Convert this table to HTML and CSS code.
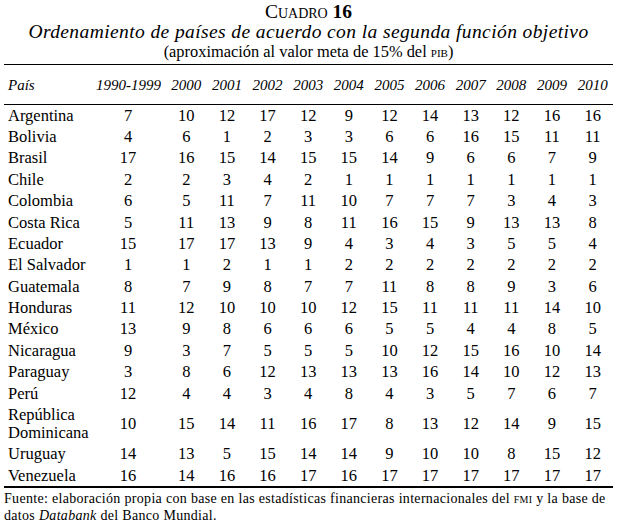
FILE: index.html
```html
<!DOCTYPE html>
<html lang="es">
<head>
<meta charset="utf-8">
<link rel="stylesheet" href="styles.css">
</head>
<body>
<div class="page">
  <div class="caption">
    <div class="label">Cuadro <b>16</b></div>
    <div class="title">Ordenamiento de países de acuerdo con la segunda función objetivo</div>
    <div class="subtitle">(aproximación al valor meta de 15% del <span class="sc">pib</span>)</div>
  </div>
  <table class="data">
    <colgroup>
      <col class="c-country"><col class="c-period">
      <col><col><col><col><col><col><col><col><col><col><col>
    </colgroup>
    <thead>
      <tr><th class="country">País</th><th class="period">1990-1999</th><th>2000</th><th>2001</th><th>2002</th><th>2003</th><th>2004</th><th>2005</th><th>2006</th><th>2007</th><th>2008</th><th>2009</th><th>2010</th></tr>
    </thead>
    <tbody>
      <tr><td class="country">Argentina</td><td class="period">7</td><td>10</td><td>12</td><td>17</td><td>12</td><td>9</td><td>12</td><td>14</td><td>13</td><td>12</td><td>16</td><td>16</td></tr>
      <tr><td class="country">Bolivia</td><td class="period">4</td><td>6</td><td>1</td><td>2</td><td>3</td><td>3</td><td>6</td><td>6</td><td>16</td><td>15</td><td>11</td><td>11</td></tr>
      <tr><td class="country">Brasil</td><td class="period">17</td><td>16</td><td>15</td><td>14</td><td>15</td><td>15</td><td>14</td><td>9</td><td>6</td><td>6</td><td>7</td><td>9</td></tr>
      <tr><td class="country">Chile</td><td class="period">2</td><td>2</td><td>3</td><td>4</td><td>2</td><td>1</td><td>1</td><td>1</td><td>1</td><td>1</td><td>1</td><td>1</td></tr>
      <tr><td class="country">Colombia</td><td class="period">6</td><td>5</td><td>11</td><td>7</td><td>11</td><td>10</td><td>7</td><td>7</td><td>7</td><td>3</td><td>4</td><td>3</td></tr>
      <tr><td class="country">Costa Rica</td><td class="period">5</td><td>11</td><td>13</td><td>9</td><td>8</td><td>11</td><td>16</td><td>15</td><td>9</td><td>13</td><td>13</td><td>8</td></tr>
      <tr><td class="country">Ecuador</td><td class="period">15</td><td>17</td><td>17</td><td>13</td><td>9</td><td>4</td><td>3</td><td>4</td><td>3</td><td>5</td><td>5</td><td>4</td></tr>
      <tr><td class="country">El Salvador</td><td class="period">1</td><td>1</td><td>2</td><td>1</td><td>1</td><td>2</td><td>2</td><td>2</td><td>2</td><td>2</td><td>2</td><td>2</td></tr>
      <tr><td class="country">Guatemala</td><td class="period">8</td><td>7</td><td>9</td><td>8</td><td>7</td><td>7</td><td>11</td><td>8</td><td>8</td><td>9</td><td>3</td><td>6</td></tr>
      <tr><td class="country">Honduras</td><td class="period">11</td><td>12</td><td>10</td><td>10</td><td>10</td><td>12</td><td>15</td><td>11</td><td>11</td><td>11</td><td>14</td><td>10</td></tr>
      <tr><td class="country">México</td><td class="period">13</td><td>9</td><td>8</td><td>6</td><td>6</td><td>6</td><td>5</td><td>5</td><td>4</td><td>4</td><td>8</td><td>5</td></tr>
      <tr><td class="country">Nicaragua</td><td class="period">9</td><td>3</td><td>7</td><td>5</td><td>5</td><td>5</td><td>10</td><td>12</td><td>15</td><td>16</td><td>10</td><td>14</td></tr>
      <tr><td class="country">Paraguay</td><td class="period">3</td><td>8</td><td>6</td><td>12</td><td>13</td><td>13</td><td>13</td><td>16</td><td>14</td><td>10</td><td>12</td><td>13</td></tr>
      <tr><td class="country">Perú</td><td class="period">12</td><td>4</td><td>4</td><td>3</td><td>4</td><td>8</td><td>4</td><td>3</td><td>5</td><td>7</td><td>6</td><td>7</td></tr>
      <tr><td class="country">República Dominicana</td><td class="period">10</td><td>15</td><td>14</td><td>11</td><td>16</td><td>17</td><td>8</td><td>13</td><td>12</td><td>14</td><td>9</td><td>15</td></tr>
      <tr><td class="country">Uruguay</td><td class="period">14</td><td>13</td><td>5</td><td>15</td><td>14</td><td>14</td><td>9</td><td>10</td><td>10</td><td>8</td><td>15</td><td>12</td></tr>
      <tr><td class="country">Venezuela</td><td class="period">16</td><td>14</td><td>16</td><td>16</td><td>17</td><td>16</td><td>17</td><td>17</td><td>17</td><td>17</td><td>17</td><td>17</td></tr>
    </tbody>
  </table>
  <p class="source">Fuente: elaboración propia con base en las estadísticas financieras internacionales del <span class="sc">fmi</span> y la base de datos <i>Databank</i> del Banco Mundial.</p>
</div>
</body>
</html>
```
FILE: styles.css
```css
html, body {
  margin: 0;
  padding: 0;
  background: #ffffff;
}
body {
  font-family: "Liberation Serif", "Times New Roman", serif;
  color: #000000;
}
.page {
  width: 609px;
  padding: 2px 0 0 4px;
}
.caption {
  text-align: center;
}
.label {
  font-variant: small-caps;
  font-size: 19.5px;
  line-height: 20px;
}
.label b {
  font-weight: bold;
}
.title {
  font-style: italic;
  font-size: 19.5px;
  letter-spacing: 0.4px;
  line-height: 20px;
}
.subtitle {
  font-size: 16.4px;
  line-height: 19px;
}
.sc {
  font-variant: small-caps;
}
.data {
  width: 609px;
  margin-top: 3px;
  border-collapse: collapse;
  table-layout: fixed;
  font-size: 16.5px;
}
.c-country { width: 92px; }
.c-period { width: 70px; }
.data th, .data td {
  padding: 0;
  text-align: center;
  font-weight: normal;
  white-space: nowrap;
}
.data thead th {
  font-style: italic;
  font-size: 15px;
  line-height: 18px;
  padding: 10.5px 0;
  border-top: 1px solid #000;
  border-bottom: 1px solid #000;
}
.data tbody td {
  line-height: 18px;
  padding: 1.7px 0;
}
.data tbody td.country {
  white-space: normal;
}
.data tbody tr:last-child td {
  border-bottom: 2px solid #000;
}
.data .country {
  text-align: left;
  padding-left: 4px;
}
.data .period {
  padding-right: 6px;
}
.source {
  margin: 2px 0 0;
  font-size: 14px;
  letter-spacing: 0.31px;
  line-height: 17px;
}
```
